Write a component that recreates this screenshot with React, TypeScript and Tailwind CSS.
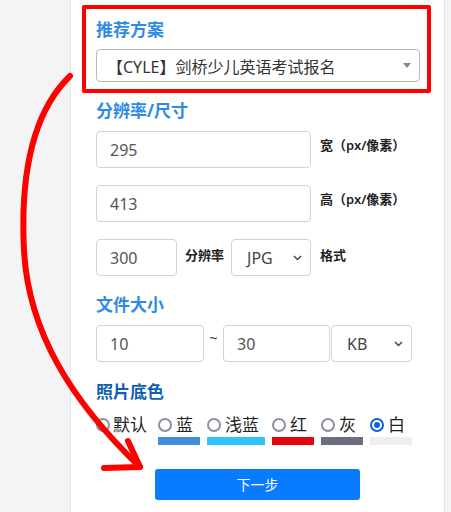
import React from "react";

const font = "font-['Noto_Sans','Noto_Sans_CJK_SC',sans-serif]";

function Chevron() {
  return (
    <svg width="9" height="6" viewBox="0 0 9 6" className="shrink-0">
      <polyline points="1,1 4.5,4.5 8,1" fill="none" stroke="#444" strokeWidth="1.5" />
    </svg>
  );
}

function Field({ value, className }: { value: string; className: string }) {
  return (
    <div className={`h-[37px] rounded-[4px] border border-[#ced4da] bg-white pl-[13px] flex items-center text-[16px] text-[#555] ${className}`}>
      {value}
    </div>
  );
}

function Dropdown({ value, className }: { value: string; className: string }) {
  return (
    <div className={`h-[37px] rounded-[4px] border border-[#ced4da] bg-white pl-[15px] pr-[8px] flex items-center justify-between text-[16px] text-[#444] ${className}`}>
      <span>{value}</span>
      <Chevron />
    </div>
  );
}

function Heading({ children, dark }: { children: React.ReactNode; dark?: boolean }) {
  return (
    <div className={`h-[22px] leading-[22px] text-[17px] font-bold ${dark ? "text-[#125fb0]" : "text-[#2e8ae4]"}`}>
      {children}
    </div>
  );
}

const colors = [
  { label: "蓝", bar: "bg-[#448ed9]", w: "w-[42px]" },
  { label: "浅蓝", bar: "bg-[#2ec3fb]", w: "w-[58px]" },
  { label: "红", bar: "bg-[#e30613]", w: "w-[42px]" },
  { label: "灰", bar: "bg-[#6b6e80]", w: "w-[42px]" },
  { label: "白", bar: "bg-[#eeeeee]", w: "w-[42px]", checked: true },
];

function Radio({ checked }: { checked?: boolean }) {
  return checked ? (
    <span className="w-[14px] h-[14px] rounded-full border-2 border-[#0b65e0] flex items-center justify-center shrink-0">
      <span className="w-[6px] h-[6px] rounded-full bg-[#0b65e0]" />
    </span>
  ) : (
    <span className="w-[14px] h-[14px] rounded-full border-2 border-[#8f8f9d] shrink-0" />
  );
}

export default function App() {
  return (
    <div className={`relative h-[512px] w-[451px] overflow-hidden bg-[#f4f4f4] ${font}`}>
      <div className="ml-[70px] w-[375px] h-full bg-white border-x border-[#e4e4e4] pl-[25px] pr-[24px] pt-[19px]">
        <Heading>推荐方案</Heading>
        <div className="mt-[8px] h-[33px] rounded-[4px] border border-[#b9b9b9] pl-[10px] pr-[8px] flex items-center justify-between text-[16px] text-[#333]">
          <span className="pt-[2px]">【CYLE】剑桥少儿英语考试报名</span>
          <span className="w-0 h-0 border-l-[4px] border-r-[4px] border-t-[5px] border-l-transparent border-r-transparent border-t-[#888]" />
        </div>

        <div className="mt-[18px]">
          <Heading>分辨率/尺寸</Heading>
        </div>
        <div className="mt-[9px] flex items-start">
          <Field value="295" className="w-[215px]" />
          <span className="ml-[9px] mt-[5px] text-[13px] font-semibold text-[#222]">宽（px/像素）</span>
        </div>
        <div className="mt-[17px] flex items-start">
          <Field value="413" className="w-[215px]" />
          <span className="ml-[9px] mt-[5px] text-[13px] font-semibold text-[#222]">高（px/像素）</span>
        </div>
        <div className="mt-[17px] flex items-start">
          <Field value="300" className="w-[81px]" />
          <span className="ml-[8px] mt-[7px] text-[13px] font-semibold text-[#222]">分辨率</span>
          <Dropdown value="JPG" className="ml-[7px] w-[80px]" />
          <span className="ml-[9px] mt-[7px] text-[13px] font-semibold text-[#222]">格式</span>
        </div>

        <div className="mt-[18px]">
          <Heading>文件大小</Heading>
        </div>
        <div className="mt-[9px] flex items-start">
          <Field value="10" className="w-[108px]" />
          <span className="w-[19px] text-center mt-[2px] text-[14px] text-[#333]">~</span>
          <Field value="30" className="w-[107px]" />
          <Dropdown value="KB" className="ml-[1px] w-[81px]" />
        </div>

        <div className="mt-[19px]">
          <Heading dark>照片底色</Heading>
        </div>
        <div className="mt-[12px] flex items-start text-[17px] leading-[20px] text-[#222]">
          <div className="w-[62px] flex items-center">
            <Radio />
            <span className="ml-[3px]">默认</span>
          </div>
          {colors.map((c) => (
            <div key={c.label} className={`${c.w} mr-[7px] flex flex-col`}>
              <div className="flex items-center">
                <Radio checked={c.checked} />
                <span className="ml-[4px]">{c.label}</span>
              </div>
              <div className={`mt-[2px] h-[8px] ${c.bar}`} />
            </div>
          ))}
        </div>

        <div className="mt-[24px] flex justify-center pr-[1px]">
          <button className="w-[205px] h-[31px] rounded-[3px] bg-[#087bff] text-white text-[14px]">下一步</button>
        </div>
      </div>

      {/* annotation overlay */}
      <div className="absolute left-[82px] top-[5px] w-[349px] h-[88px] border-[4px] border-[#ff0000] rounded-[2px] pointer-events-none" />
      <svg className="absolute left-0 top-0 pointer-events-none" width="451" height="512" viewBox="0 0 451 512">
        <path
          d="M70 76 C 35 110, 20 170, 24 250 C 28 330, 70 400, 140 467"
          fill="none"
          stroke="#ff0000"
          strokeWidth="6"
          strokeLinecap="round"
        />
        <path d="M128 441 L140 467 L104 468" fill="none" stroke="#ff0000" strokeWidth="6" strokeLinecap="round" strokeLinejoin="round" />
      </svg>
    </div>
  );
}
